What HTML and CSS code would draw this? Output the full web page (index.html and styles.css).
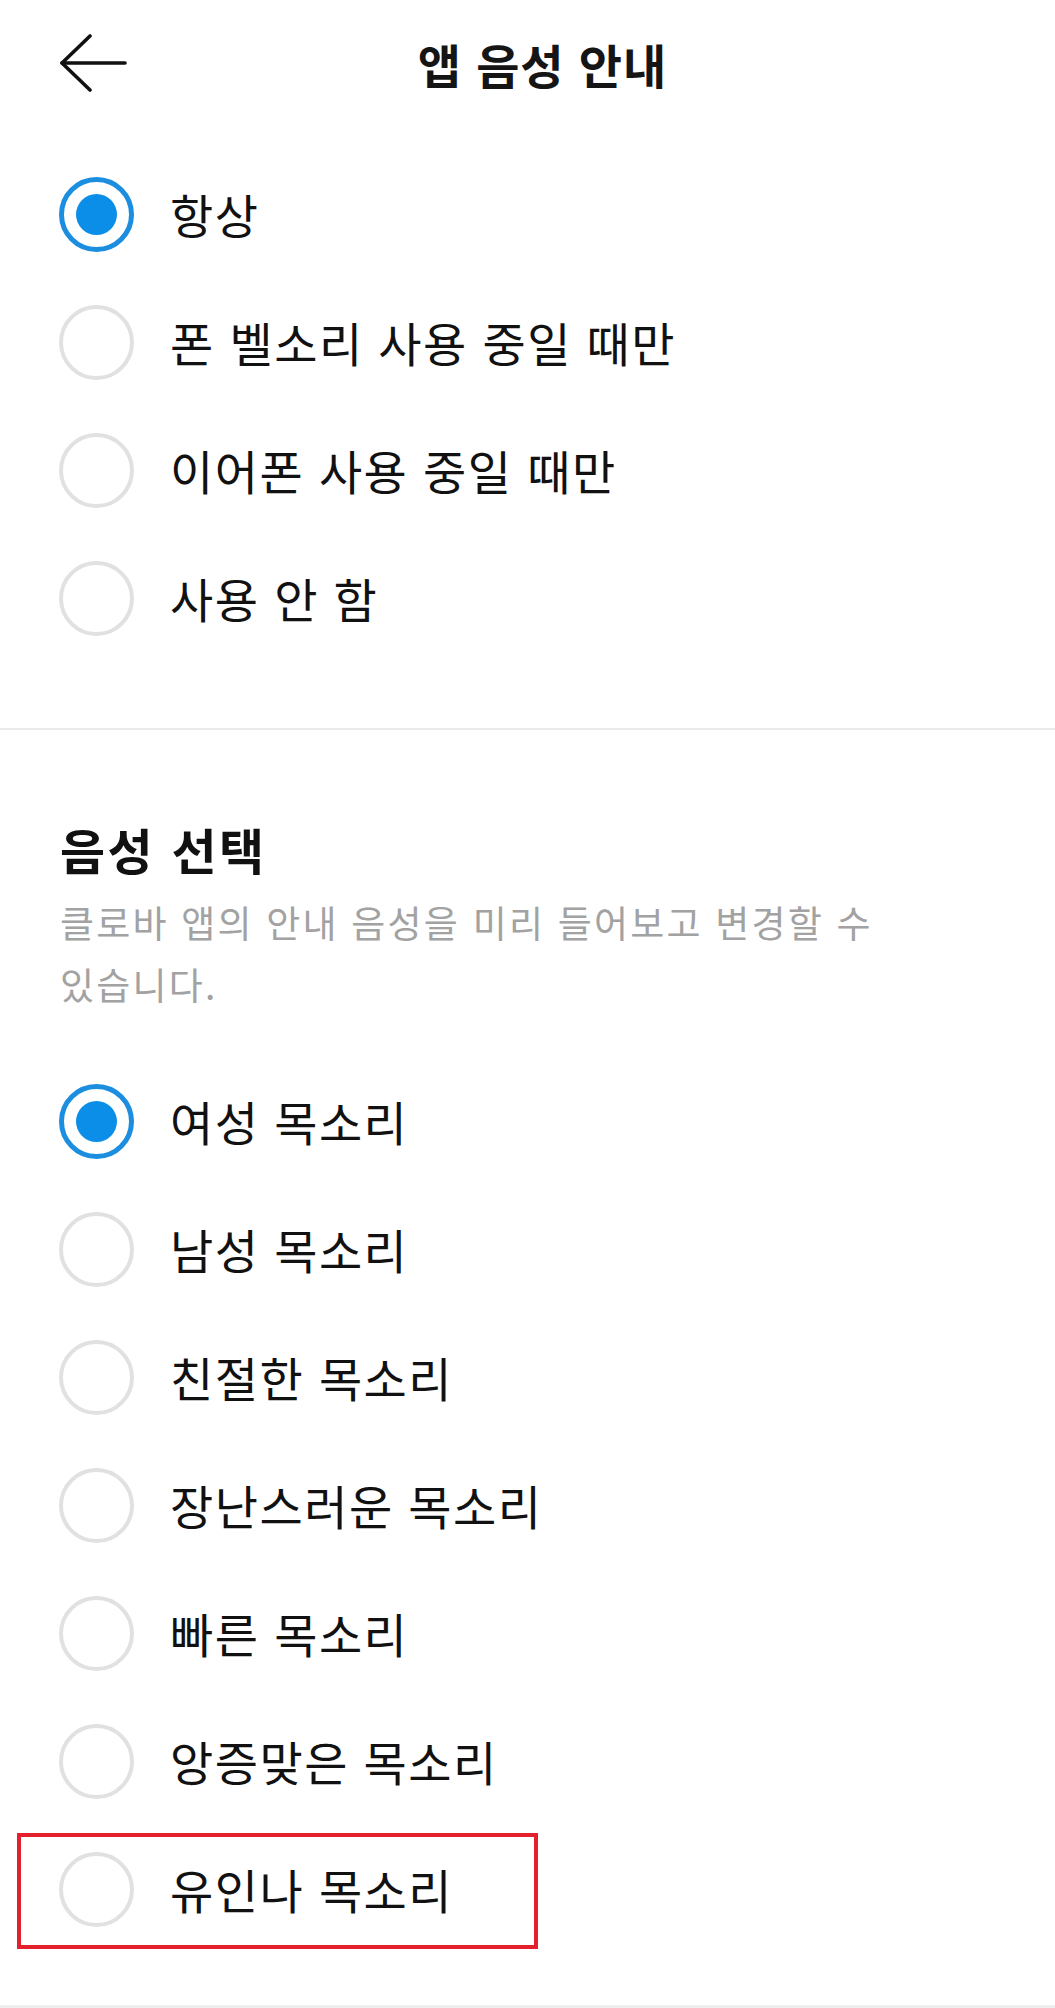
FILE: index.html
```html
<!DOCTYPE html>
<html lang="ko">
<head>
<meta charset="utf-8">
<title>앱 음성 안내</title>
<link rel="stylesheet" href="styles.css">
</head>
<body>
<div class="screen">
  <header class="topbar">
    <button class="back" aria-label="뒤로">
      <svg width="68" height="58" viewBox="0 0 68 58" fill="none" stroke="#111" stroke-width="3.6" stroke-linecap="round" stroke-linejoin="round">
        <path d="M66 29 H3"/>
        <path d="M31 2 L3 29 L31 56"/>
      </svg>
    </button>
    <h1 class="title">앱 음성 안내</h1>
  </header>

  <section class="group group-mode">
    <ul class="radio-list">
      <li class="radio-row"><span class="radio radio-on"></span><span class="label">항상</span></li>
      <li class="radio-row"><span class="radio"></span><span class="label">폰 벨소리 사용 중일 때만</span></li>
      <li class="radio-row"><span class="radio"></span><span class="label">이어폰 사용 중일 때만</span></li>
      <li class="radio-row"><span class="radio"></span><span class="label">사용 안 함</span></li>
    </ul>
  </section>

  <hr class="divider">

  <section class="group group-voice">
    <h2 class="section-title">음성 선택</h2>
    <p class="section-desc">클로바 앱의 안내 음성을 미리 들어보고 변경할 수 있습니다.</p>
    <ul class="radio-list voice-list">
      <li class="radio-row"><span class="radio radio-on"></span><span class="label">여성 목소리</span></li>
      <li class="radio-row"><span class="radio"></span><span class="label">남성 목소리</span></li>
      <li class="radio-row"><span class="radio"></span><span class="label">친절한 목소리</span></li>
      <li class="radio-row"><span class="radio"></span><span class="label">장난스러운 목소리</span></li>
      <li class="radio-row"><span class="radio"></span><span class="label">빠른 목소리</span></li>
      <li class="radio-row"><span class="radio"></span><span class="label">앙증맞은 목소리</span></li>
      <li class="radio-row radio-row-marked"><span class="radio"></span><span class="label">유인나 목소리</span><span class="highlight-box"></span></li>
    </ul>
  </section>

  <div class="page-end"></div>
</div>
</body>
</html>
```

FILE: styles.css
```css
* {
  box-sizing: border-box;
}

html, body {
  margin: 0;
  padding: 0;
  background: #ffffff;
}

body {
  font-family: "Noto Sans CJK KR", "Noto Sans", sans-serif;
  color: #111111;
}

.screen {
  width: 1055px;
  min-height: 2008px;
  background: #ffffff;
  overflow: hidden;
}

/* Header */
.topbar {
  height: 128px;
  display: grid;
  grid-template-columns: 1fr auto 1fr;
  align-items: center;
}

.back {
  justify-self: start;
  margin-left: 59px;
  padding: 0;
  border: 0;
  background: transparent;
  display: flex;
  align-items: center;
  height: 58px;
  margin-top: -2px;
}

.back svg {
  display: block;
}

.title {
  margin: 0;
  padding-left: 30px;
  font-size: 47px;
  font-weight: 700;
  line-height: 60px;
  color: #151515;
  letter-spacing: 1px;
}

/* Groups */
.group-mode {
  padding-top: 22px;
}

.radio-list {
  list-style: none;
  margin: 0;
  padding: 0;
}

.radio-row {
  position: relative;
  height: 128px;
  display: flex;
  align-items: center;
  padding-left: 59px;
}

.radio {
  flex: none;
  width: 75px;
  height: 75px;
  border-radius: 50%;
  border: 4px solid #e1e1e1;
  display: flex;
  align-items: center;
  justify-content: center;
}

.radio-on {
  border: 5px solid #1b8ee0;
}

.radio-on::after {
  content: "";
  width: 41px;
  height: 41px;
  border-radius: 50%;
  background: #0a8ee8;
}

.label {
  margin-left: 36px;
  font-size: 47px;
  line-height: 60px;
  letter-spacing: 1.5px;
  color: #111111;
  white-space: nowrap;
}

/* Divider */
.divider {
  margin: 66px 0 0;
  border: 0;
  height: 2px;
  background: #ebebeb;
}

/* Voice section */
.group-voice {
  padding: 0 60px;
}

.section-title {
  margin: 89px 0 0;
  font-size: 49px;
  font-weight: 700;
  line-height: 60px;
  letter-spacing: 2.5px;
  color: #111111;
}

.section-desc {
  margin: 12px 0 0;
  padding-right: 40px;
  font-size: 37px;
  line-height: 62px;
  letter-spacing: 2.2px;
  word-break: keep-all;
  color: #a2a2a2;
}

.voice-list {
  margin: 42px -60px 0;
}

.highlight-box {
  position: absolute;
  left: 17px;
  top: 8px;
  width: 521px;
  height: 116px;
  border: 4px solid #e3202b;
  pointer-events: none;
}

.page-end {
  margin-top: 52px;
  height: 3px;
  background: #eeeeee;
}
```
